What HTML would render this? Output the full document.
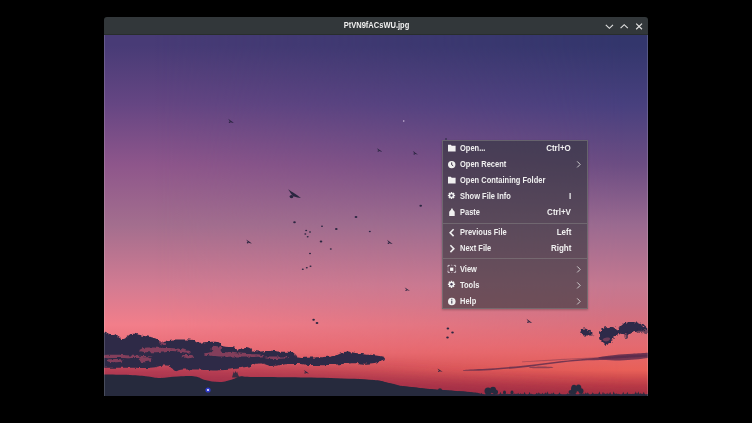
<!DOCTYPE html>
<html><head><meta charset="utf-8">
<style>
html,body{margin:0;padding:0;background:#000;width:752px;height:423px;overflow:hidden;font-family:"Liberation Sans",sans-serif;}
#win{position:absolute;left:104px;top:17px;width:544px;height:379px;background:#000;border-radius:3px 3px 0 0;overflow:hidden;}
#tb{position:absolute;left:0;top:0;width:544px;height:18px;background:#32373a;}
#title{position:absolute;left:0;top:-1px;width:544px;height:18px;line-height:18px;text-align:center;color:#f0f0f0;font-size:8.6px;font-weight:bold;}
#title span{display:inline-block;transform:scaleX(0.875);}
#photo{position:absolute;left:0;top:18px;}
#menu{position:absolute;left:442px;top:140px;width:146px;height:169px;background:rgba(50,53,58,0.62);box-sizing:border-box;border:1px solid rgba(125,125,125,0.6);box-shadow:0 1px 2px rgba(0,0,0,0.25);}
.it{position:absolute;left:0;width:144px;height:16px;color:#f0f0f0;font-size:8.4px;font-weight:bold;}
.it .l{position:absolute;left:17px;top:0;line-height:16px;transform-origin:0 50%;transform:scaleX(0.895);white-space:nowrap;}
.it .r{position:absolute;right:16px;top:0;line-height:16px;transform-origin:100% 50%;transform:scaleX(0.955);white-space:nowrap;}
.it svg{position:absolute;left:0;top:0;}
.sep{position:absolute;left:0;width:144px;height:1px;background:rgba(140,140,140,0.45);}
</style></head><body>
<div id="win">
  <div id="tb">
    <div style="position:absolute;left:0;top:17px;width:544px;height:1px;background:rgba(30,36,30,0.5)"></div><div id="title"><span>PtVN9fACsWU.jpg</span></div>
    <svg style="position:absolute;left:500px;top:5px" width="44" height="9" viewBox="0 0 44 9">
      <path d="M1.8 2.8 L5.4 6.3 L9 2.8" stroke="#e0e0e0" stroke-width="1.15" fill="none"/>
      <path d="M16.6 6.2 L20.2 2.7 L23.8 6.2" stroke="#e0e0e0" stroke-width="1.15" fill="none"/>
      <path d="M32.2 1.6 L38 7.2 M38 1.6 L32.2 7.2" stroke="#e0e0e0" stroke-width="1.2" fill="none"/>
    </svg>
  </div>
  <svg id="photo" width="544" height="361" viewBox="0 0 544 361">
    <defs>
      <linearGradient id="skyL" x1="0" y1="0" x2="0" y2="361" gradientUnits="userSpaceOnUse">
        <stop offset="0.028" stop-color="#483b76"/>
        <stop offset="0.194" stop-color="#664683"/>
        <stop offset="0.360" stop-color="#8e568b"/>
        <stop offset="0.526" stop-color="#a36e8e"/>
        <stop offset="0.693" stop-color="#d27b92"/>
        <stop offset="0.803" stop-color="#f27e8a"/>
        <stop offset="0.88" stop-color="#e86a74"/>
        <stop offset="0.93" stop-color="#c04458"/>
        <stop offset="1" stop-color="#a03048"/>
      </linearGradient>
      <linearGradient id="skyR" x1="0" y1="0" x2="0" y2="361" gradientUnits="userSpaceOnUse">
        <stop offset="0.028" stop-color="#33366c"/>
        <stop offset="0.194" stop-color="#48407e"/>
        <stop offset="0.360" stop-color="#6c4d83"/>
        <stop offset="0.526" stop-color="#9a6a90"/>
        <stop offset="0.693" stop-color="#c47890"/>
        <stop offset="0.748" stop-color="#cc7488"/>
        <stop offset="0.859" stop-color="#e46a70"/>
        <stop offset="0.928" stop-color="#e86058"/>
        <stop offset="0.97" stop-color="#bc3c46"/>
        <stop offset="1" stop-color="#a83040"/>
      </linearGradient>
      <linearGradient id="mgrad" x1="51" y1="0" x2="521" y2="0" gradientUnits="userSpaceOnUse">
        <stop offset="0" stop-color="#000"/>
        <stop offset="1" stop-color="#fff"/>
      </linearGradient>
      <mask id="mR"><rect width="544" height="361" fill="url(#mgrad)"/></mask>
      <filter id="bl" x="-5%" y="-5%" width="110%" height="110%"><feGaussianBlur stdDeviation="0.7"/></filter>
      <filter id="rough" x="-5%" y="-20%" width="110%" height="140%"><feTurbulence type="fractalNoise" baseFrequency="0.25" numOctaves="2" seed="3" result="n"/><feDisplacementMap in="SourceGraphic" in2="n" scale="4" xChannelSelector="R" yChannelSelector="G"/><feGaussianBlur stdDeviation="0.6"/></filter>
      <g id="bird"><path d="M-6.4 -4.8 C-4.5 -3.6 -2 -1.8 0.5 -0.2 C2.5 1 4.5 2.4 6.4 4 C4 3.8 2 3.4 -0.5 2.6 C-2 1.8 -3.5 0 -4.5 -2 C-5.2 -3 -5.8 -4 -6.4 -4.8 Z"/><ellipse cx="-3" cy="2.6" rx="1.9" ry="1.7"/></g>
      <filter id="bl8" x="-20%" y="-50%" width="140%" height="200%"><feGaussianBlur stdDeviation="9"/></filter>
      <filter id="rough2" x="-20%" y="-30%" width="140%" height="160%"><feTurbulence type="fractalNoise" baseFrequency="0.35" numOctaves="2" seed="7" result="n"/><feDisplacementMap in="SourceGraphic" in2="n" scale="5" xChannelSelector="R" yChannelSelector="G"/><feGaussianBlur stdDeviation="0.5"/></filter>
      <filter id="bl2"><feGaussianBlur stdDeviation="0.4"/></filter>
    </defs>
    <rect width="544" height="361" fill="url(#skyL)"/>
    <rect width="544" height="361" fill="url(#skyR)" mask="url(#mR)"/>
    <path d="M-20 336 C100 336 250 338 330 346 C400 352 470 358 564 360 L564 380 L-20 380 Z" fill="#982c48" opacity="0.55" filter="url(#bl8)"/>
    <g filter="url(#rough)">
      <!-- left cloud bank -->
      <path d="M-6.0 297.5 C-3.9 296.0 -2.7 297.1 0.0 297.5 C2.7 297.9 1.9 298.3 4.0 299.0 C6.1 299.7 5.9 300.2 7.8 300.2 C9.7 300.2 9.3 298.4 11.0 298.9 C12.7 299.4 12.0 300.6 14.3 302.0 C16.6 303.4 16.9 304.3 19.5 304.0 C22.1 303.7 21.7 302.2 24.0 300.8 C26.3 299.4 25.3 299.2 28.0 298.9 C30.7 298.6 31.1 299.0 34.0 299.5 C36.9 300.0 34.9 299.9 39.0 300.8 C43.1 301.7 45.3 301.6 49.5 302.8 C53.7 304.0 51.9 304.3 54.7 305.4 C57.5 306.5 57.3 307.0 60.0 306.9 C62.7 306.8 60.7 305.7 65.0 305.0 C69.3 304.3 70.0 304.4 76.3 304.4 C82.6 304.4 84.1 304.2 88.8 305.0 C93.5 305.8 89.5 307.0 93.8 307.5 C98.1 308.0 99.3 306.9 105.0 306.9 C110.7 306.9 111.3 306.3 115.0 307.5 C118.7 308.7 114.8 310.0 118.8 311.3 C122.8 312.6 125.9 311.6 130.0 312.5 C134.1 313.4 130.8 314.4 134.0 314.5 C137.2 314.6 137.8 312.7 142.0 313.0 C146.2 313.3 145.6 314.9 149.8 315.8 C154.0 316.7 152.7 316.4 157.6 316.4 C162.5 316.4 163.1 315.7 168.0 315.8 C172.9 315.9 171.2 316.4 176.0 316.7 C180.8 317.0 182.0 316.4 186.0 317.0 C190.0 317.6 188.9 317.5 191.0 319.0 C193.1 320.5 190.0 321.7 194.0 322.6 C198.0 323.5 198.8 322.7 206.0 322.5 C213.2 322.3 214.9 322.4 221.0 322.0 C227.1 321.6 225.0 321.8 229.0 321.0 C233.0 320.2 232.5 320.1 236.0 319.0 C239.5 317.9 238.8 317.1 242.0 316.7 C245.2 316.3 244.8 317.0 248.0 317.5 C251.2 318.0 250.3 318.0 254.0 318.5 C257.7 319.0 257.2 319.0 262.0 319.5 C266.8 320.0 267.0 319.6 272.0 320.5 C277.0 321.4 279.5 321.5 280.6 323.0 C281.7 324.5 279.9 324.6 276.0 326.0 C272.1 327.4 274.0 327.8 266.0 328.4 C258.0 329.0 253.7 328.2 246.0 328.4 C238.3 328.6 242.3 328.6 237.0 329.0 C231.7 329.4 234.3 329.7 226.0 330.0 C217.7 330.3 215.1 330.2 206.0 330.0 C196.9 329.8 198.9 329.3 192.0 329.1 C185.1 328.9 186.4 329.0 180.0 329.4 C173.6 329.8 174.7 330.9 168.0 330.7 C161.3 330.5 161.9 328.2 155.0 328.5 C148.1 328.8 152.4 330.2 142.0 332.0 C131.6 333.8 129.9 334.6 116.0 335.3 C102.1 336.0 100.7 334.7 90.0 334.6 C79.3 334.5 80.8 334.5 76.0 335.0 C71.2 335.5 74.7 337.1 72.0 336.3 C69.3 335.5 69.2 333.5 66.0 332.0 C62.8 330.5 65.3 330.3 60.0 330.5 C54.7 330.7 55.1 332.1 46.0 332.7 C36.9 333.3 38.3 332.7 26.0 332.7 C13.7 332.7 8.5 332.7 0.0 332.7 C-8.5 332.7 -3.9 334.8 -6.0 332.7 C-8.1 330.6 -7.5 331.1 -8.0 325.0 C-8.5 318.9 -8.0 315.9 -8.0 310.0 C-8.0 304.1 -8.5 306.3 -8.0 303.0 C-7.5 299.7 -8.1 299.0 -6.0 297.5 Z" fill="#2d2946"/>
    </g>
    <g filter="url(#bl)">
      <path d="M-8.0 339.5 C-6.0 338.0 -6.8 339.4 0.0 339.5 C6.8 339.6 17.2 339.6 26.0 340.0 C34.8 340.4 38.0 340.9 44.0 341.5 C50.0 342.1 50.0 343.0 56.0 343.0 C62.0 343.0 67.0 341.8 74.0 341.5 C81.0 341.2 85.6 340.8 91.0 341.5 C96.4 342.2 96.0 343.9 101.0 345.0 C106.0 346.1 110.6 347.1 116.0 347.0 C121.4 346.9 124.0 345.6 128.0 344.5 C132.0 343.4 132.4 342.0 136.0 341.5 C139.6 341.0 137.2 341.9 146.0 342.0 C154.8 342.1 164.0 342.0 180.0 342.2 C196.0 342.4 208.0 342.4 226.0 343.0 C244.0 343.6 258.4 344.0 270.0 345.0 C281.6 346.0 278.8 346.8 284.0 348.0 C289.2 349.2 289.6 350.0 296.0 351.0 C302.4 352.0 308.0 352.2 316.0 353.0 C324.0 353.8 326.0 354.0 336.0 354.8 C346.0 355.6 358.0 356.3 366.0 357.0 C374.0 357.7 372.8 357.7 376.0 358.5 C379.2 359.3 380.8 359.7 382.0 361.0 C383.2 362.3 419.2 363.8 382.0 365.0 C344.8 366.2 274.0 367.0 196.0 367.0 C118.0 367.0 33.2 367.4 -8.0 365.0 C-49.2 362.6 -9.6 358.6 -10.0 355.0 C-10.4 351.4 -10.4 350.1 -10.0 347.0 C-9.6 343.9 -10.0 341.0 -8.0 339.5 Z" fill="#252a3e"/>
    </g>
    <g filter="url(#rough)" fill="#b84c68" opacity="0.62">
      <path d="M0.0 320.5 C2.9 319.7 4.1 319.8 11.0 319.8 C17.9 319.8 17.2 320.1 26.0 320.5 C34.8 320.9 38.7 320.8 44.0 321.2 C49.3 321.6 49.5 321.5 46.0 322.0 C42.5 322.5 39.5 322.7 31.0 323.0 C22.5 323.3 22.3 323.1 14.0 323.0 C5.7 322.9 3.7 323.5 0.0 322.8 C-3.7 322.1 -2.9 321.3 0.0 320.5 Z"/>
      <path d="M37.0 314.0 C39.1 312.9 40.9 312.8 46.0 312.5 C51.1 312.2 49.1 312.5 56.0 312.8 C62.9 313.1 64.0 312.5 72.0 313.5 C80.0 314.5 83.3 315.4 86.0 316.5 C88.7 317.6 87.3 317.6 82.0 317.5 C76.7 317.4 74.3 316.1 66.0 316.0 C57.7 315.9 58.5 317.2 51.0 317.3 C43.5 317.4 41.7 317.4 38.0 316.5 C34.3 315.6 34.9 315.1 37.0 314.0 Z"/>
      <path d="M102.0 318.0 C105.5 317.2 106.9 316.9 116.0 317.0 C125.1 317.1 124.8 317.7 136.0 318.5 C147.2 319.3 153.2 319.1 158.0 320.0 C162.8 320.9 159.9 321.4 154.0 321.8 C148.1 322.2 146.1 321.6 136.0 321.5 C125.9 321.4 124.8 321.9 116.0 321.5 C107.2 321.1 106.7 320.9 103.0 320.0 C99.3 319.1 98.5 318.8 102.0 318.0 Z"/>
      <path d="M108.5 312.0 C109.8 310.7 110.6 311.0 113.0 311.3 C115.4 311.6 116.7 311.2 117.6 313.0 C118.5 314.8 117.5 315.9 116.5 318.0 C115.5 320.1 115.7 320.6 114.0 321.0 C112.3 321.4 111.6 320.8 110.0 319.5 C108.4 318.2 108.4 318.0 108.0 316.0 C107.6 314.0 107.2 313.3 108.5 312.0 Z"/>
      <path d="M4.0 325.0 C4.8 324.2 6.5 324.2 10.0 324.0 C13.5 323.8 14.3 323.9 17.0 324.3 C19.7 324.7 20.5 324.8 20.0 325.5 C19.5 326.2 18.5 326.6 15.0 327.0 C11.5 327.4 9.9 327.5 7.0 327.0 C4.1 326.5 3.2 325.8 4.0 325.0 Z"/>
      <path d="M35.0 324.0 C35.8 322.9 37.1 322.9 40.0 322.6 C42.9 322.3 43.9 322.2 46.0 323.0 C48.1 323.8 48.8 324.4 48.0 325.5 C47.2 326.6 45.9 326.7 43.0 327.0 C40.1 327.3 39.1 327.6 37.0 326.8 C34.9 326.0 34.2 325.1 35.0 324.0 Z"/>
      <path d="M160.0 322.0 C161.3 321.4 164.6 321.5 171.0 321.5 C177.4 321.5 181.6 321.4 184.0 322.0 C186.4 322.6 184.8 323.1 180.0 323.6 C175.2 324.1 171.3 324.2 166.0 323.8 C160.7 323.4 158.7 322.6 160.0 322.0 Z"/>
      <path d="M56.0 306.0 C57.2 305.9 58.4 306.3 60.0 307.5 C61.6 308.7 62.5 309.7 62.0 310.5 C61.5 311.3 59.7 311.2 58.0 310.5 C56.3 309.8 56.0 309.2 55.5 308.0 C55.0 306.8 54.8 306.1 56.0 306.0 Z"/>
      <path d="M78.0 320.5 C79.1 319.8 80.8 319.9 84.0 320.0 C87.2 320.1 89.5 320.2 90.0 321.0 C90.5 321.8 88.7 322.6 86.0 323.0 C83.3 323.4 82.1 323.2 80.0 322.5 C77.9 321.8 76.9 321.2 78.0 320.5 Z"/>
    </g>
    <g fill="#252a3e" filter="url(#bl2)">
      <path d="M128 342.5 L129 339 L129.8 336.5 L130.5 338.5 L131.5 335.8 L132.3 338 L133.2 336.8 L134 339.5 L135.5 342.5 Z" opacity="0.85"/>
      
    </g>
    <circle cx="104" cy="355" r="2.6" fill="#3040f0" opacity="0.8" filter="url(#bl2)"/>
    <circle cx="104" cy="355" r="1.1" fill="#f0e8ff"/>
    <!-- right clouds -->
    <g filter="url(#rough2)" fill="#2e2948">
      <path d="M476.5 297.0 C476.9 295.9 476.9 295.3 478.0 294.5 C479.1 293.7 479.6 293.5 481.0 293.6 C482.4 293.7 482.6 294.1 484.0 295.0 C485.4 295.9 485.7 296.3 487.0 297.5 C488.3 298.7 490.1 299.3 489.4 300.0 C488.7 300.7 486.4 300.4 484.0 300.4 C481.6 300.4 480.8 300.5 479.0 300.2 C477.2 299.9 477.1 299.7 476.5 299.0 C475.9 298.3 476.1 298.1 476.5 297.0 Z"/>
      <path d="M496.0 298.0 C496.9 296.4 497.1 295.4 499.0 294.0 C500.9 292.6 501.7 292.4 504.0 292.0 C506.3 291.6 506.9 291.8 509.0 292.5 C511.1 293.2 511.5 293.9 513.0 295.0 C514.5 296.1 515.5 295.8 515.5 297.0 C515.5 298.2 514.3 298.8 513.0 300.0 C511.7 301.2 511.2 300.8 510.0 302.0 C508.8 303.2 508.9 303.5 508.0 305.0 C507.1 306.5 507.4 307.4 506.0 308.5 C504.6 309.6 503.6 309.9 502.0 309.5 C500.4 309.1 500.4 308.3 499.0 307.0 C497.6 305.7 496.9 305.4 496.0 304.0 C495.1 302.6 495.0 302.4 495.0 301.0 C495.0 299.6 495.1 299.6 496.0 298.0 Z"/>
      <path d="M514.0 295.0 C514.5 293.4 515.4 292.6 517.0 291.0 C518.6 289.4 518.9 288.9 521.0 288.0 C523.1 287.1 523.4 287.1 526.0 287.0 C528.6 286.9 529.4 287.0 532.0 287.5 C534.6 288.0 534.9 288.1 537.0 289.0 C539.1 289.9 539.5 290.2 541.0 291.5 C542.5 292.8 544.0 293.6 543.5 294.5 C543.0 295.4 541.2 295.1 539.0 295.5 C536.8 295.9 536.3 295.5 534.0 296.0 C531.7 296.5 531.3 296.8 529.0 297.5 C526.7 298.2 526.3 298.6 524.0 299.0 C521.7 299.4 521.1 299.2 519.0 299.0 C516.9 298.8 516.2 298.9 515.0 298.0 C513.8 297.1 513.5 296.6 514.0 295.0 Z"/>
      <path d="M532.0 295.0 C533.4 294.4 535.4 294.3 538.0 294.5 C540.6 294.7 541.8 294.9 543.0 296.0 C544.2 297.1 544.4 298.5 543.0 299.0 C541.6 299.5 539.6 298.5 537.0 298.0 C534.4 297.5 533.2 297.7 532.0 297.0 C530.8 296.3 530.6 295.6 532.0 295.0 Z" opacity="0.6"/>
      <path d="M522.0 298.0 C522.7 297.4 524.0 297.6 524.5 298.5 C525.0 299.4 524.5 300.7 524.0 302.0 C523.5 303.3 523.1 304.2 522.5 304.0 C521.9 303.8 521.6 302.4 521.5 301.0 C521.4 299.6 521.3 298.6 522.0 298.0 Z" opacity="0.7"/>
    </g>
    <g filter="url(#bl2)" fill="#b05068" opacity="0.5">
      <path d="M499.0 304.0 C499.7 303.2 501.4 302.6 503.0 302.5 C504.6 302.4 505.8 302.7 506.0 303.5 C506.2 304.3 505.4 305.4 504.0 306.0 C502.6 306.6 501.2 306.5 500.0 306.0 C498.8 305.5 498.3 304.8 499.0 304.0 Z"/>
    </g>
    <!-- streaks -->
    <g filter="url(#bl)" fill="#5a2c4c">
      <path d="M362.0 334.8 C366.0 334.4 376.2 334.2 386.0 333.5 C395.8 332.8 411.0 331.5 421.0 330.5 C431.0 329.5 437.8 328.4 446.0 327.5 C454.2 326.6 461.7 325.6 470.0 324.8 C478.3 324.0 487.5 323.2 496.0 322.5 C504.5 321.8 513.0 321.0 521.0 320.5 C529.0 320.0 539.5 319.8 544.0 319.6 C548.5 319.4 547.3 319.0 548.0 319.5 C548.7 320.0 548.7 321.9 548.0 322.5 C547.3 323.1 546.8 322.7 544.0 323.0 C541.2 323.3 535.7 324.1 531.0 324.5 C526.3 324.9 521.8 325.4 516.0 325.5 C510.2 325.6 503.7 324.9 496.0 325.0 C488.3 325.1 478.3 325.5 470.0 326.2 C461.7 326.9 454.2 328.0 446.0 329.0 C437.8 330.0 431.0 331.2 421.0 332.2 C411.0 333.2 395.8 334.6 386.0 335.2 C376.2 335.8 366.0 335.9 362.0 335.8 C358.0 335.7 358.0 335.2 362.0 334.8 Z" opacity="0.8"/>
      <path d="M426.0 332.2 C427.8 332.0 433.3 331.6 437.0 331.6 C440.7 331.6 446.2 331.8 448.0 332.0 C449.8 332.2 449.8 332.8 448.0 333.0 C446.2 333.2 440.7 333.2 437.0 333.2 C433.3 333.2 427.8 333.2 426.0 333.0 C424.2 332.8 424.2 332.4 426.0 332.2 Z" opacity="0.6"/>
      <path d="M496.0 322.0 C498.5 321.4 505.7 320.5 511.0 320.0 C516.3 319.5 522.5 319.2 528.0 318.8 C533.5 318.4 540.7 318.0 544.0 317.8 C547.3 317.6 547.3 317.0 548.0 317.5 C548.7 318.0 548.7 320.3 548.0 321.0 C547.3 321.7 547.3 321.2 544.0 321.5 C540.7 321.8 533.5 322.2 528.0 322.5 C522.5 322.8 516.3 323.3 511.0 323.5 C505.7 323.7 498.5 323.8 496.0 323.5 C493.5 323.2 493.5 322.6 496.0 322.0 Z" opacity="0.85"/>
      <path d="M418 326.5 C440 325 470 323 500 322 C520 321.3 535 321 544 320.8 L544 321.6 C520 322.2 490 323.2 460 325 C445 326 430 326.8 418 327.2 Z" opacity="0.4"/>
    </g>
    <g fill="#2a2640" filter="url(#bl2)">
    <use href="#bird" transform="translate(127.0 86.0) scale(0.45)"/>
    <use href="#bird" transform="translate(190.5 159.0) scale(1)"/>
    <use href="#bird" transform="translate(275.5 115.0) scale(0.42)"/>
    <use href="#bird" transform="translate(311.4 118.0) scale(0.4)"/>
    <ellipse cx="316.7" cy="170.7" rx="1.3" ry="0.98"/>
    <ellipse cx="252.0" cy="182.0" rx="1.3" ry="0.98"/>
    <use href="#bird" transform="translate(145.0 206.6) scale(0.45)"/>
    <ellipse cx="190.5" cy="187.3" rx="1.3" ry="0.98"/>
    <ellipse cx="202.2" cy="195.6" rx="1.0" ry="0.75"/>
    <ellipse cx="206.0" cy="197.0" rx="1.0" ry="0.75"/>
    <ellipse cx="201.3" cy="199.0" rx="1.0" ry="0.75"/>
    <ellipse cx="203.7" cy="201.7" rx="1.0" ry="0.75"/>
    <ellipse cx="218.0" cy="191.3" rx="1.0" ry="0.75"/>
    <ellipse cx="232.3" cy="194.0" rx="1.3" ry="0.98"/>
    <ellipse cx="217.0" cy="206.6" rx="1.3" ry="0.98"/>
    <ellipse cx="226.8" cy="214.0" rx="1.0" ry="0.75"/>
    <ellipse cx="265.8" cy="196.5" rx="1.0" ry="0.75"/>
    <use href="#bird" transform="translate(285.8 207.0) scale(0.45)"/>
    <ellipse cx="206.0" cy="218.6" rx="1.0" ry="0.75"/>
    <ellipse cx="198.8" cy="234.3" rx="1.0" ry="0.75"/>
    <ellipse cx="202.8" cy="232.8" rx="1.0" ry="0.75"/>
    <ellipse cx="206.5" cy="231.2" rx="1.0" ry="0.75"/>
    <use href="#bird" transform="translate(303.3 254.3) scale(0.4)"/>
    <ellipse cx="209.6" cy="284.7" rx="1.3" ry="0.98"/>
    <ellipse cx="213.0" cy="288.0" rx="1.3" ry="0.98"/>
    <ellipse cx="343.9" cy="293.6" rx="1.3" ry="0.98"/>
    <ellipse cx="348.5" cy="297.4" rx="1.3" ry="0.98"/>
    <ellipse cx="343.5" cy="302.6" rx="1.3" ry="0.98"/>
    <use href="#bird" transform="translate(336.0 335.3) scale(0.4)"/>
    <use href="#bird" transform="translate(425.3 286.0) scale(0.45)"/>
    <use href="#bird" transform="translate(202.3 336.9) scale(0.4)"/>
    <ellipse cx="342.0" cy="104.0" rx="1.0" ry="0.75"/>
    </g>
    <circle cx="299.7" cy="86" r="0.8" fill="#e8d8f0" opacity="0.8"/>
    <!-- treeline -->
    <g fill="#262a3e" filter="url(#bl2)">
      <path d="M280.0 347.0 L290.0 349.0 L296.0 350.7 L312.0 352.6 L324.7 354.5 L343.8 355.8 L359.8 356.6 L371.0 358.2 L376.0 359.0 L377.0 358.9 L377.7 357.7 L378.4 358.9 L379.5 359.2 L380.2 359.2 L380.9 359.2 L382.5 359.0 L383.2 358.2 L383.9 359.0 L384.1 359.1 L384.8 358.7 L385.5 359.1 L385.7 358.8 L386.4 357.2 L387.1 358.8 L388.7 359.0 L389.4 358.2 L390.1 359.0 L391.7 359.2 L392.4 359.2 L393.1 359.2 L393.7 359.2 L394.4 359.2 L395.1 359.2 L395.7 358.7 L396.4 356.7 L397.1 358.7 L398.2 359.1 L398.9 358.7 L399.6 359.1 L401.2 359.1 L401.9 358.7 L402.6 359.1 L402.8 359.1 L403.5 358.7 L404.2 359.1 L405.8 359.1 L406.5 358.7 L407.2 359.1 L407.8 359.2 L408.5 359.2 L409.2 359.2 L409.4 359.0 L410.1 358.2 L410.8 359.0 L411.4 359.1 L412.1 358.7 L412.8 359.1 L413.4 358.9 L414.1 357.7 L414.8 358.9 L415.9 359.0 L416.6 358.2 L417.3 359.0 L417.9 359.1 L418.6 358.7 L419.3 359.1 L419.9 358.7 L420.6 356.7 L421.3 358.7 L422.4 359.2 L423.1 359.2 L423.8 359.2 L424.9 358.7 L425.6 356.7 L426.3 358.7 L426.9 359.1 L427.6 358.7 L428.3 359.1 L429.4 359.2 L430.1 359.2 L430.8 359.2 L431.9 358.9 L432.6 357.7 L433.3 358.9 L433.5 358.8 L434.2 357.2 L434.9 358.8 L435.1 358.9 L435.8 357.7 L436.5 358.9 L437.6 358.9 L438.3 357.7 L439.0 358.9 L440.6 358.8 L441.3 357.2 L442.0 358.8 L442.6 358.6 L443.3 356.2 L444.0 358.6 L445.6 359.1 L446.3 358.7 L447.0 359.1 L447.2 358.9 L447.9 357.7 L448.6 358.9 L448.8 358.8 L449.5 357.2 L450.2 358.8 L451.8 359.2 L452.5 359.2 L453.2 359.2 L454.8 358.8 L455.5 357.2 L456.2 358.8 L457.8 359.2 L458.5 359.2 L459.2 359.2 L460.8 359.2 L461.5 359.2 L462.2 359.2 L462.8 359.0 L463.5 358.2 L464.2 359.0 L464.4 359.0 L465.1 358.2 L465.8 359.0 L467.4 358.8 L468.1 357.2 L468.8 358.8 L469.9 358.9 L470.6 357.7 L471.3 358.9 L472.9 359.2 L473.6 359.2 L474.3 359.2 L475.4 358.9 L476.1 357.7 L476.8 358.9 L477.0 358.7 L477.7 356.7 L478.4 358.7 L478.6 359.0 L479.3 358.2 L480.0 359.0 L481.1 358.8 L481.8 357.2 L482.5 358.8 L483.1 358.8 L483.8 357.2 L484.5 358.8 L485.6 359.2 L486.3 359.2 L487.0 359.2 L488.1 358.8 L488.8 357.2 L489.5 358.8 L490.6 359.1 L491.3 358.7 L492.0 359.1 L492.2 359.1 L492.9 358.7 L493.6 359.1 L494.7 358.6 L495.4 356.2 L496.1 358.6 L496.7 359.2 L497.4 359.2 L498.1 359.2 L498.3 358.7 L499.0 356.7 L499.7 358.7 L499.9 359.0 L500.6 358.2 L501.3 359.0 L502.4 358.9 L503.1 357.7 L503.8 358.9 L505.4 358.7 L506.1 356.7 L506.8 358.7 L507.4 359.2 L508.1 359.2 L508.8 359.2 L509.0 358.6 L509.7 356.2 L510.4 358.6 L511.5 359.0 L512.2 358.2 L512.9 359.0 L513.5 359.1 L514.2 358.7 L514.9 359.1 L516.5 359.2 L517.2 359.2 L517.9 359.2 L518.5 358.7 L519.2 356.7 L519.9 358.7 L521.0 359.1 L521.7 358.7 L522.4 359.1 L522.6 358.7 L523.3 356.7 L524.0 358.7 L525.1 359.1 L525.8 358.7 L526.5 359.1 L528.1 359.1 L528.8 358.7 L529.5 359.1 L531.1 358.6 L531.8 356.2 L532.5 358.6 L533.6 358.6 L534.3 356.2 L535.0 358.6 L536.1 358.9 L536.8 357.7 L537.5 358.9 L539.1 358.7 L539.8 356.7 L540.5 358.7 L541.1 359.2 L541.8 359.2 L542.5 359.2 L544.1 359.1 L544.8 358.7 L545.5 359.1 L546.0 359.0 L546.0 362.0 L280.0 362.0 L280.0 349.0 Z"/>
      <ellipse cx="384" cy="356" rx="3.5" ry="3.5"/><ellipse cx="389" cy="355" rx="3" ry="3.2"/><ellipse cx="391.5" cy="357" rx="2.5" ry="2.5"/>
      <ellipse cx="336" cy="355" rx="2" ry="1.8"/>
      <ellipse cx="400.5" cy="357.5" rx="1.5" ry="2"/><ellipse cx="408" cy="357.5" rx="1.5" ry="2"/>
      <ellipse cx="470" cy="354.5" rx="3" ry="4.8"/><ellipse cx="474.5" cy="353" rx="2.8" ry="3.6"/><ellipse cx="477" cy="356" rx="2.5" ry="2.8"/><ellipse cx="467" cy="357" rx="2.5" ry="2"/>
    </g>
    <rect x="0" y="0" width="1" height="361" fill="#fff" opacity="0.16"/>
    <rect x="543" y="0" width="1" height="361" fill="#fff" opacity="0.16"/>
    </svg>
</div>
<div id="menu">
  <div class="it" style="top:-1px"><svg width="16" height="16"><path d="M5 4.8h2.8l0.9 1h3.9v5.6H5z" fill="#f0f0f0"/></svg><span class="l">Open...</span><span class="r">Ctrl+O</span></div>
  <div class="it" style="top:15px"><svg width="16" height="16"><circle cx="8.7" cy="8.6" r="3.7" fill="#f0f0f0"/><path d="M8.7 6.4v2.4l1.5 1" stroke="#3a3046" stroke-width="1" fill="none"/></svg><span class="l">Open Recent</span><svg style="left:133px" width="8" height="16"><path d="M1.2 5.4l3 3-3 3" stroke="#d8d8d8" stroke-width="0.9" fill="none"/></svg></div>
  <div class="it" style="top:31px"><svg width="16" height="16"><path d="M5 4.8h2.8l0.9 1h3.9v5.6H5z" fill="#f0f0f0"/></svg><span class="l">Open Containing Folder</span></div>
  <div class="it" style="top:47px"><svg width="16" height="16"><g transform="translate(8.5 7.5) scale(0.92)"><path id="gear" d="M2.78 -0.84 L3.92 -0.78 L3.92 0.78 L2.78 0.84 L2.56 1.37 L3.33 2.22 L2.22 3.33 L1.37 2.56 L0.84 2.78 L0.78 3.92 L-0.78 3.92 L-0.84 2.78 L-1.37 2.56 L-2.22 3.33 L-3.33 2.22 L-2.56 1.37 L-2.78 0.84 L-3.92 0.78 L-3.92 -0.78 L-2.78 -0.84 L-2.56 -1.37 L-3.33 -2.22 L-2.22 -3.33 L-1.37 -2.56 L-0.84 -2.78 L-0.78 -3.92 L0.78 -3.92 L0.84 -2.78 L1.37 -2.56 L2.22 -3.33 L3.33 -2.22 L2.56 -1.37Z" fill="#f0f0f0"/><circle r="1.3" fill="#4a3e58"/></g></svg><span class="l">Show File Info</span><span class="r">I</span></div>
  <div class="it" style="top:63px"><svg width="16" height="16"><path d="M8.3 4.5h1.3l0.3 1.3 1.8 1.9V12H6.2V7.7L8 5.8z" fill="#f0f0f0"/></svg><span class="l">Paste</span><span class="r">Ctrl+V</span></div>
  <div class="sep" style="top:82px"></div>
  <div class="it" style="top:83px"><svg width="16" height="16"><path d="M10.6 5.3l-3.4 3.4 3.4 3.4" stroke="#f0f0f0" stroke-width="1.6" fill="none"/></svg><span class="l">Previous File</span><span class="r">Left</span></div>
  <div class="it" style="top:99px"><svg width="16" height="16"><path d="M7.4 5.3l3.4 3.4-3.4 3.4" stroke="#f0f0f0" stroke-width="1.6" fill="none"/></svg><span class="l">Next File</span><span class="r">Right</span></div>
  <div class="sep" style="top:117px"></div>
  <div class="it" style="top:120px"><svg width="16" height="16"><path d="M5 6.2V4.4h1.8M10.8 4.4h1.8v1.8M12.6 9.6v1.8h-1.8M6.8 11.4H5V9.6" stroke="#d8d0d8" stroke-width="0.9" fill="none"/><path d="M8 4.6l0.8-1 0.8 1zM12.4 7.2l0.6 0.8-0.6 0.8zM8 11.2l0.8 0.8 0.8-0.8zM5.2 7.2l-0.6 0.8 0.6 0.8z" fill="#d8d0d8"/><rect x="7.1" y="6.6" width="3.2" height="3.3" fill="#f4f4f4"/></svg><span class="l">View</span><svg style="left:133px" width="8" height="16"><path d="M1.2 5.4l3 3-3 3" stroke="#d8d8d8" stroke-width="0.9" fill="none"/></svg></div>
  <div class="it" style="top:136px"><svg width="16" height="16"><g transform="translate(8.5 7.3) scale(0.92)"><use href="#gear"/><circle r="1.3" fill="#4a3e58"/></g></svg><span class="l">Tools</span><svg style="left:133px" width="8" height="16"><path d="M1.2 5.4l3 3-3 3" stroke="#d8d8d8" stroke-width="0.9" fill="none"/></svg></div>
  <div class="it" style="top:152px"><svg width="16" height="16"><circle cx="8.8" cy="8.5" r="3.8" fill="#f0f0f0"/><rect x="8.3" y="7.6" width="1" height="3" fill="#3a3046"/><rect x="8.3" y="5.8" width="1" height="1" fill="#3a3046"/></svg><span class="l">Help</span><svg style="left:133px" width="8" height="16"><path d="M1.2 5.4l3 3-3 3" stroke="#d8d8d8" stroke-width="0.9" fill="none"/></svg></div>
</div>
</body></html>
